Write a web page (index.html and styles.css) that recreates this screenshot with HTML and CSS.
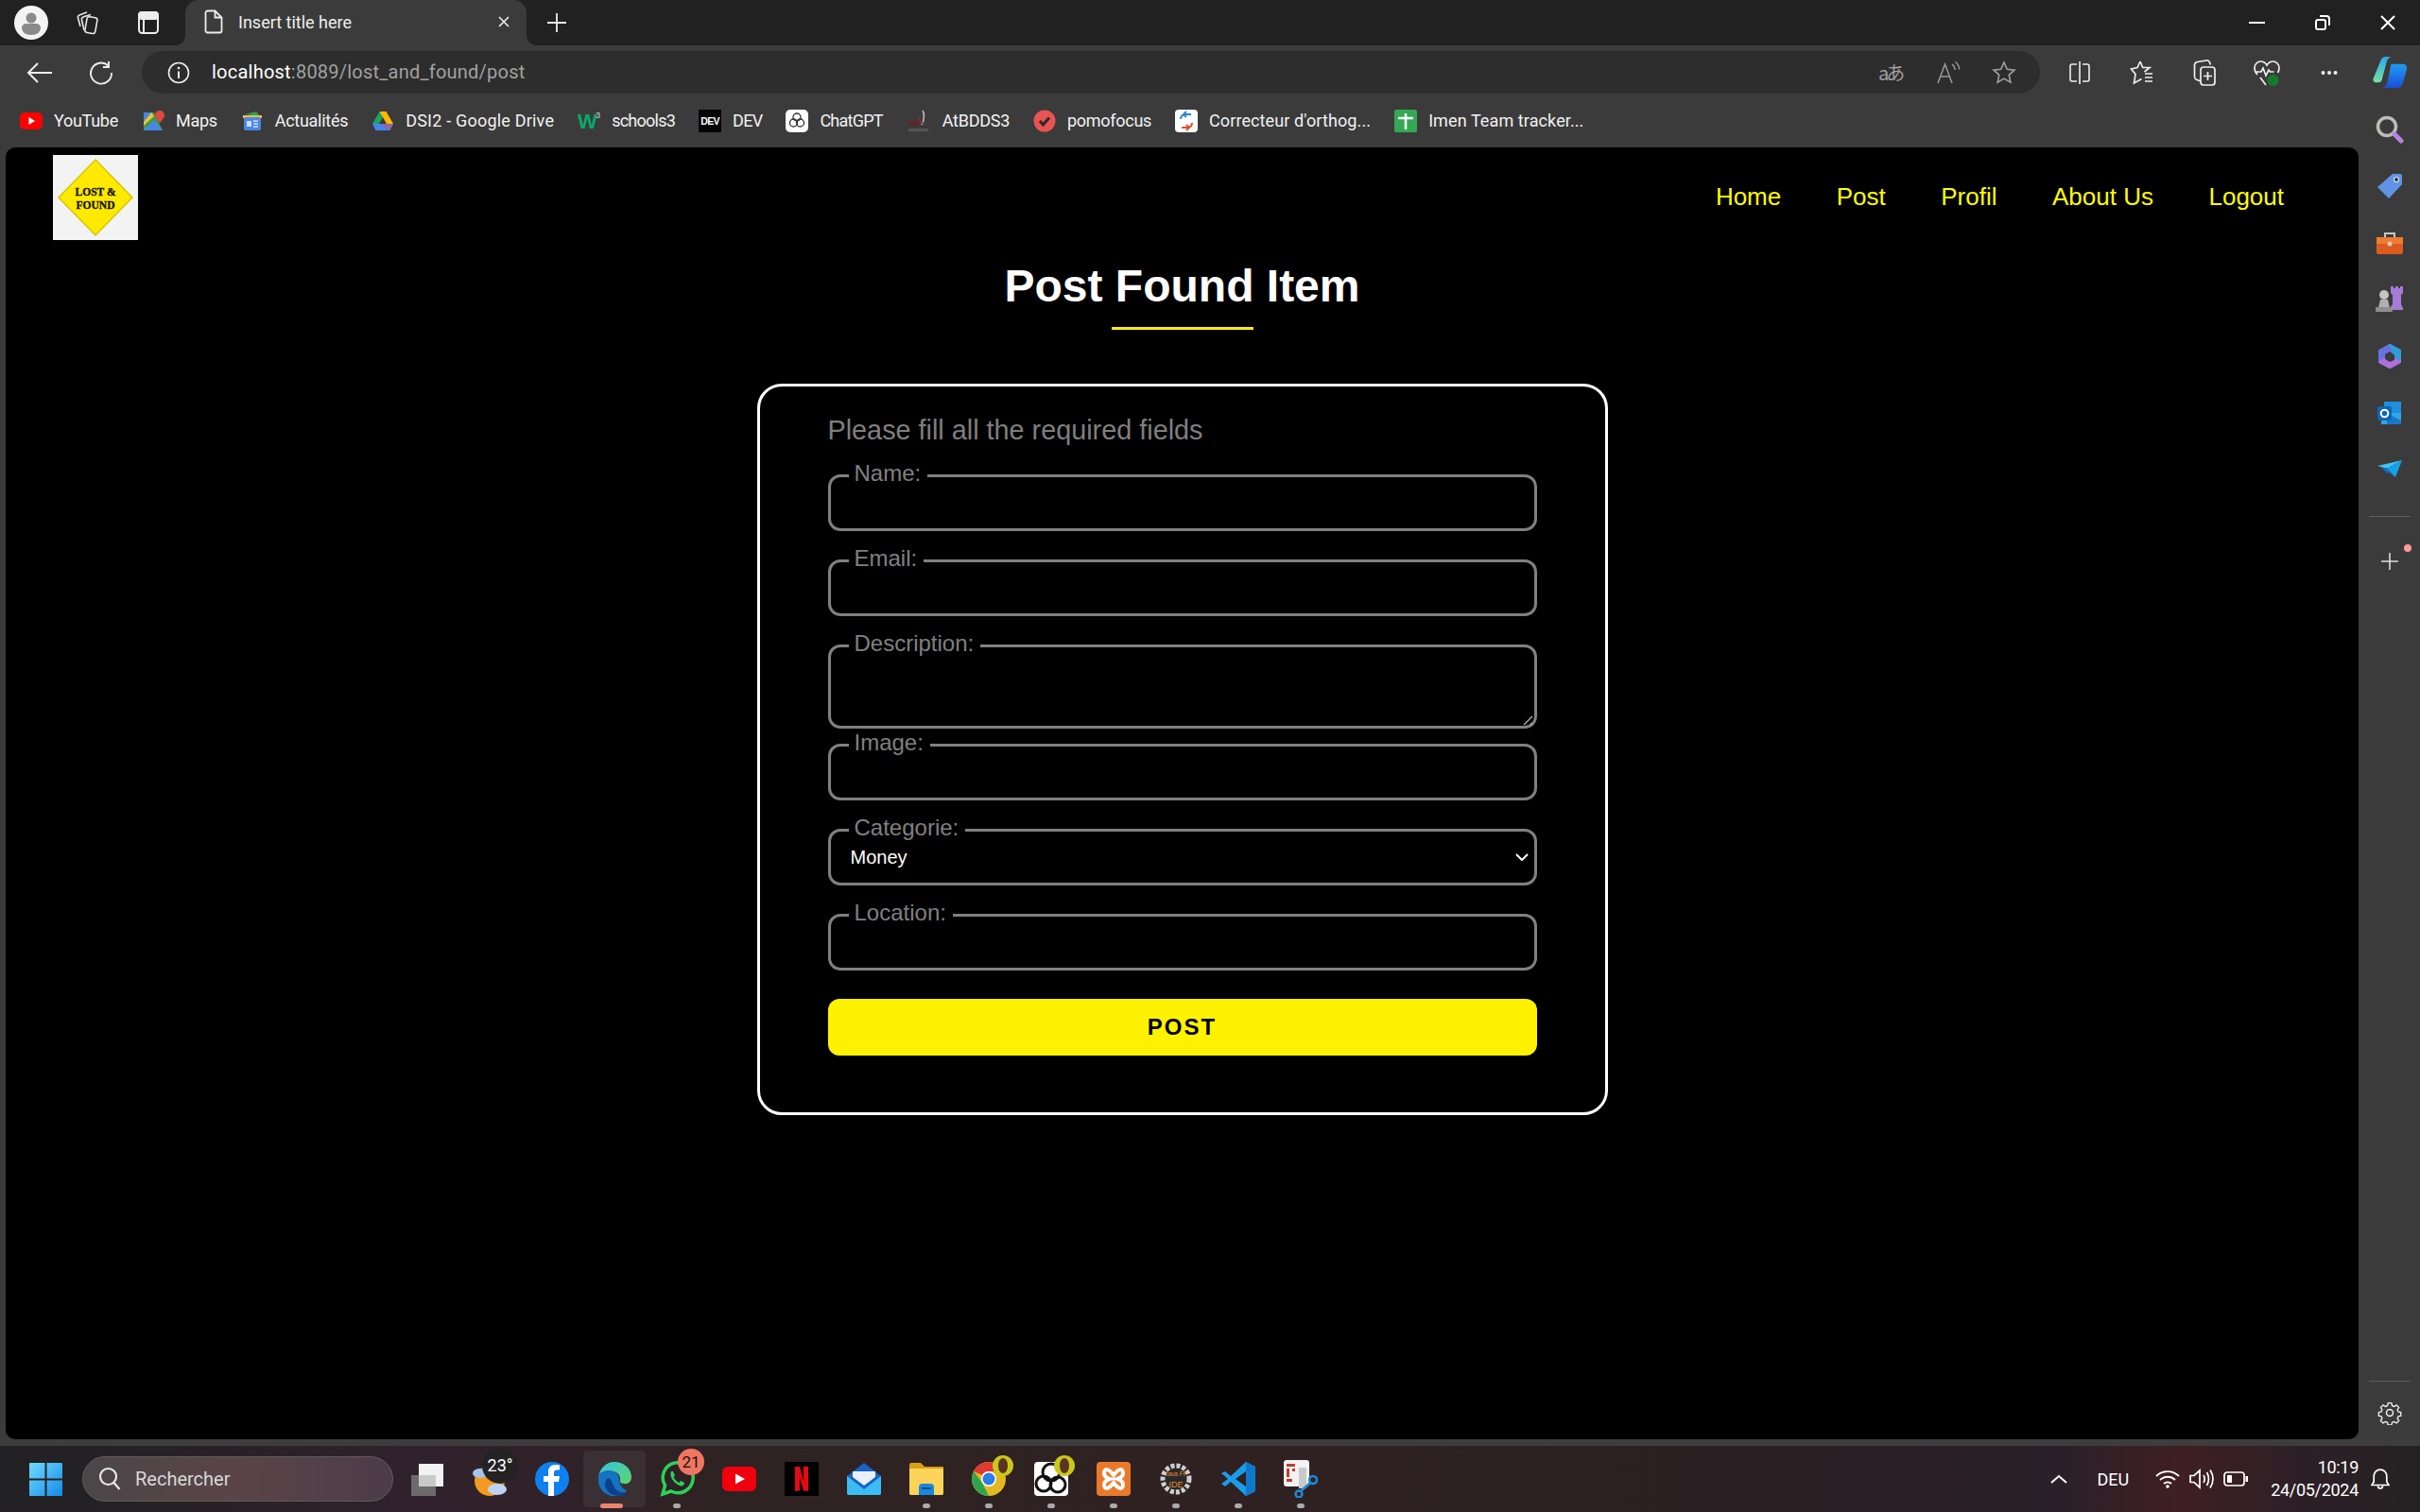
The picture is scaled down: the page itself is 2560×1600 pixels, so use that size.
FILE: index.html
```html
<!DOCTYPE html>
<html lang="fr">
<head>
<meta charset="utf-8">
<title>Insert title here</title>
<link rel="stylesheet" href="styles.css">
</head>
<body>
<div class="window">
  <div class="tabstrip">
    <div class="strip-left">
      <span class="avatar"><svg width="36" height="36" viewBox="0 0 36 36"><circle cx="18" cy="18" r="18" fill="#f4f4f4"/><circle cx="18" cy="13" r="5.500" fill="#8a8a8a"/><path d="M8 23a5 5 0 0 1 5-4h10a5 5 0 0 1 5 4c0 5-4 8-10 8s-10-3-10-8z" fill="#8a8a8a"/></svg></span>
      <span class="strip-icon workspaces"><svg width="28" height="28" viewBox="0 0 28 28" fill="none" stroke="#e8e8e8" stroke-width="1.600"><rect x="12" y="8" width="11" height="17" rx="2.500" transform="rotate(10 17 16)"/><path d="M10 22 7.500 11c-.4-1.800.3-2.800 2-3.300L17 5.500"/><path d="M6 18 3.500 9c-.4-1.800.3-2.800 2-3.300L13 3"/></svg></span>
      <span class="strip-icon tabs-icon"><svg width="24" height="26" viewBox="0 0 24 26" fill="none" stroke="#ececec" stroke-width="2"><rect x="2" y="2" width="20" height="22" rx="3.500"/><rect x="2" y="2" width="20" height="7" rx="3" fill="#ececec"/><path d="M7 9v15"/></svg></span>
    </div>
    <div class="tab">
      <svg class="tab-page" width="20" height="26" viewBox="0 0 20 26" fill="none" stroke="#ececec" stroke-width="1.800"><path d="M3.500 1.500h8l7 7v14a2 2 0 0 1-2 2h-13a2 2 0 0 1-2-2v-19a2 2 0 0 1 2-2zM11.500 1.500v7h7"/></svg>
      <span class="tab-title">Insert title here</span>
      <span class="tab-close"><svg width="14" height="14" viewBox="0 0 14 14" stroke="#eee" stroke-width="1.600"><path d="M2 2l10 10M12 2 2 12"/></svg></span>
    </div>
    <span class="new-tab"><svg width="22" height="22" viewBox="0 0 22 22" stroke="#eee" stroke-width="1.800"><path d="M11 1v20M1 11h20"/></svg></span>
    <div class="win-controls">
      <span class="win-btn"><svg width="18" height="4" viewBox="0 0 18 4"><rect y="1" width="17" height="2" fill="#fff"/></svg></span>
      <span class="win-btn"><svg width="18" height="18" viewBox="0 0 18 18" fill="none" stroke="#fff" stroke-width="2"><rect x="2" y="6" width="10" height="10" rx="2"/><path d="M6 2h7a3 3 0 0 1 3 3v7"/></svg></span>
      <span class="win-btn"><svg width="18" height="18" viewBox="0 0 18 18" stroke="#fff" stroke-width="2"><path d="M2 2l14 14M16 2 2 16"/></svg></span>
    </div>
  </div>

  <div class="toolbar">
    <span class="nav-btn"><svg width="28" height="24" viewBox="0 0 28 24" fill="none" stroke="#eee" stroke-width="2"><path d="M27 12H2M12 2 2 12l10 10"/></svg></span>
    <span class="nav-btn"><svg width="26" height="26" viewBox="0 0 26 26" fill="none" stroke="#eee" stroke-width="1.900"><path d="M20.500 5.500A11 11 0 1 0 24 13M21 1v6h-6"/></svg></span>
    <div class="address">
      <svg class="info" width="24" height="24" viewBox="0 0 24 24" fill="none" stroke="#eee" stroke-width="1.600"><circle cx="12" cy="12" r="10.500"/><path d="M12 10.500V18" stroke-width="2"/><circle cx="12" cy="7" r="1.300" fill="#eee" stroke="none"/></svg>
      <span class="url"><span class="url-host">localhost</span>:8089/lost_and_found/post</span>
      <span class="addr-icons">
        <span class="addr-glyph">aあ</span>
        <svg width="26" height="26" viewBox="0 0 26 26" fill="none" stroke="#999" stroke-width="1.500"><path d="M2 24 9.500 4 17 24M5 17h9M17 4c2 1.500 3 3.500 3 6M20.500 1.500c2.500 2 4 5 4 8"/></svg>
        <svg width="26" height="26" viewBox="0 0 26 26" fill="none" stroke="#a0a0a0" stroke-width="1.600"><path d="m13 2 3.300 7.300 7.700.8-5.800 5.200 1.700 7.900-6.900-4.100-6.900 4.100 1.700-7.900L2 10.100l7.700-.8z"/></svg>
      </span>
    </div>
    <div class="tool-icons">
      <span class="tool-icon"><svg width="24" height="24" viewBox="0 0 24 24" fill="none" stroke="#eee" stroke-width="1.600"><path d="M9 3H4a2 2 0 0 0-2 2v14a2 2 0 0 0 2 2h5M15 3h5a2 2 0 0 1 2 2v14a2 2 0 0 1-2 2h-5M12 0v24"/></svg></span>
      <span class="tool-icon"><svg width="26" height="28" viewBox="0 0 26 28" fill="none" stroke="#eee" stroke-width="1.700"><path d="m11 2 2.700 6.500H21L15.500 13M11 2 8 8.500 1.500 10l4.500 5.500L4.500 25l8-4.500M16 15h8M16 19h8M16 23h8"/></svg></span>
      <span class="tool-icon"><svg width="28" height="30" viewBox="0 0 28 30" fill="none" stroke="#eee" stroke-width="1.700"><rect x="10" y="9" width="15" height="19" rx="3"/><path d="M17.500 14v9M13 18.500h9M10 24 5 22c-1-.6-1.500-1.500-1.500-3V7c0-2 1-3 3-3.500L16 2c1.500-.2 3 .5 3.500 2l.8 2.500"/></svg></span>
      <span class="tool-icon heart"><svg width="30" height="30" viewBox="0 0 30 30" fill="none" stroke="#eee" stroke-width="1.700"><path d="M5 17C3 15 2 13 2 10c0-4 3-7 6.500-7 3 0 5 1.500 6.500 4 1.500-2.500 3.500-4 6.500-4C25 3 28 6 28 10c0 2-.5 3.500-1.500 5M4 14h5l2-4 3 8 3-6 1.500 2h4M8 20l6 8"/><circle cx="21.500" cy="23" r="6" fill="#167a2c" stroke="none"/></svg></span>
      <span class="tool-icon"><svg width="18" height="6" viewBox="0 0 18 6" fill="#eee"><circle cx="2.500" cy="3" r="2"/><circle cx="9" cy="3" r="2"/><circle cx="15.500" cy="3" r="2"/></svg></span>
    </div>
    <span class="copilot"><svg width="37" height="33" viewBox="0 0 38 34"><defs><linearGradient id="cpa" x1="0" y1="0" x2="0" y2="1"><stop offset="0" stop-color="#2aa8ea"/><stop offset="1" stop-color="#7be0a0"/></linearGradient><linearGradient id="cpb" x1="0" y1="0" x2="0" y2="1"><stop offset="0" stop-color="#1f9cf0"/><stop offset="1" stop-color="#1a4fd8"/></linearGradient></defs><path d="M9 3c1-2 3-3 5-3h6c-3 1-4 3-5 6l-5 19c-.5 2-2 3-4 3H3c-2 0-3-2-2.500-4z" fill="url(#cpa)"/><path d="M20 8h13c3 0 5 3 4 6l-4 14c-1 4-3 6-7 6H10c4-1 5-3 6-7l4-19z" fill="url(#cpb)"/></svg></span>
  </div>

  <div class="bookmarks">
    <span class="bm"><svg width="24" height="24" viewBox="0 0 24 24"><rect y="3" width="24" height="18" rx="5" fill="#f00"/><path d="m9.500 8 6.500 4-6.500 4z" fill="#fff"/></svg>YouTube</span>
    <span class="bm"><svg width="24" height="24" viewBox="0 0 24 24"><path d="M2 3h11l9 19H2z" fill="#3a9a52"/><path d="M2 22 13 11l9 11z" fill="#4a86e8"/><path d="M2 3h8L2 13z" fill="#4a86e8"/><path d="M10 3 2 13v4L13 7z" fill="#f2c230"/><path d="M19 1a5 5 0 0 0-5 5c0 3 5 8 5 8s5-5 5-8a5 5 0 0 0-5-5z" fill="#e0483c"/></svg>Maps</span>
    <span class="bm"><svg width="24" height="24" viewBox="0 0 24 24"><path d="M4 5 16 2l4 5z" fill="#2f9e55"/><path d="M2 6h20v3H2z" fill="#f4bf3c"/><rect x="3" y="8" width="18" height="14" rx="2" fill="#4a86e8"/><rect x="6" y="12" width="5" height="6" fill="#cfe0fb"/><path d="M13 12h5M13 15h5M13 18h5" stroke="#cfe0fb" stroke-width="1.500"/></svg>Actualités</span>
    <span class="bm bm-wide"><svg width="24" height="24" viewBox="0 0 24 24"><path d="M8.500 2h7L8 15H1z" fill="#1ea362"/><path d="M15.500 2 23 15h-7L8.500 2z" fill="#ffba00"/><path d="M1 15h22l-3.500 7h-15z" fill="#4285f4"/><path d="M8 15h15l-3.500 7z" fill="#ea4335" opacity=".45"/></svg>DSI2 - Google Drive</span>
    <span class="bm bm-tight"><svg width="24" height="24" viewBox="0 0 24 24"><text x="0" y="20" class="w3-letter">W</text><text x="19" y="9" class="w3-sup">3</text></svg>schools3</span>
    <span class="bm bm-tight"><svg width="24" height="24" viewBox="0 0 24 24"><rect width="24" height="24" fill="#050505"/><text x="12" y="16" text-anchor="middle" class="dev-mark">DEV</text></svg>DEV</span>
    <span class="bm bm-tight"><svg width="24" height="24" viewBox="0 0 24 24"><rect width="24" height="24" rx="5" fill="#fff"/><g fill="none" stroke="#333" stroke-width="1.300"><circle cx="12" cy="8" r="4"/><circle cx="8.500" cy="14" r="4"/><circle cx="15.500" cy="14" r="4"/></g></svg>ChatGPT</span>
    <span class="bm"><svg width="26" height="24" viewBox="0 0 26 24"><path d="M2 12h11v5H2z" fill="#5a2626"/><path d="M17 1c2 3 2 10-1 15" fill="none" stroke="#b9b9b9" stroke-width="1.600"/><path d="M13 7c0 5 3 8 7 8" fill="none" stroke="#7a3232" stroke-width="1.500"/><path d="M2 20h21v3H2z" fill="#555"/></svg>AtBDDS3</span>
    <span class="bm"><svg width="24" height="24" viewBox="0 0 24 24"><circle cx="12" cy="12" r="11.500" fill="#e95352"/><path d="m7 12 3.500 4L17 8.500" fill="none" stroke="#2a2a2a" stroke-width="3"/></svg>pomofocus</span>
    <span class="bm bm-loose"><svg width="24" height="24" viewBox="0 0 24 24"><rect width="24" height="24" rx="4" fill="#fff"/><path d="M6 10c0-4 3-5 6-5h5M12 2 9 5l3 3" fill="none" stroke="#2b86d9" stroke-width="2"/><path d="M18 14c0 4-3 5-6 5H7M12 16l3 3-3 3" fill="none" stroke="#e2512f" stroke-width="2"/></svg>Correcteur d'orthog...</span>
    <span class="bm bm-loose"><svg width="24" height="24" viewBox="0 0 24 24"><rect width="24" height="24" rx="2" fill="#34a853"/><path d="M4 9h16M12 4v17" stroke="#fff" stroke-width="2.500"/></svg>Imen Team tracker...</span>
  </div>

  <div class="middle">
    <main class="content">
      <header class="site-header">
        <svg class="logo" width="90" height="90" viewBox="0 0 90 90"><rect width="90" height="90" fill="#f3f3f3"/><path d="M45 5 84 45 45 85 6 45z" fill="#ffe900" stroke="#d6c600" stroke-width="1.500"/><text x="45" y="43" class="logo-text">LOST &amp;</text><text x="45" y="57" class="logo-text">FOUND</text></svg>
        <nav class="site-nav">
          <a class="site-link">Home</a>
          <a class="site-link">Post</a>
          <a class="site-link">Profil</a>
          <a class="site-link">About Us</a>
          <a class="site-link">Logout</a>
        </nav>
      </header>
      <h1 class="page-title">Post Found Item</h1>
      <div class="title-rule"></div>
      <form class="card">
        <p class="card-hint">Please fill all the required fields</p>
        <fieldset class="field"><legend class="field-label">Name:</legend><input class="field-input" type="text"></fieldset>
        <fieldset class="field"><legend class="field-label">Email:</legend><input class="field-input" type="text"></fieldset>
        <fieldset class="field field-tight"><legend class="field-label">Description:</legend>
          <div class="area-wrap"><textarea class="field-area"></textarea><svg class="area-grip" width="11" height="11" viewBox="0 0 11 11" fill="none" stroke="#b4b4b4" stroke-width="1.300"><path d="M1 10 10 1M8 10l2-2"/></svg></div>
        </fieldset>
        <fieldset class="field"><legend class="field-label">Image:</legend><input class="field-input" type="text"></fieldset>
        <fieldset class="field"><legend class="field-label">Categorie:</legend>
          <div class="select-wrap"><select class="field-select"><option>Money</option></select><svg class="select-chevron" width="14" height="9" viewBox="0 0 14 9" fill="none" stroke="#fff" stroke-width="2"><path d="m1 1.500 6 6 6-6"/></svg></div>
        </fieldset>
        <fieldset class="field"><legend class="field-label">Location:</legend><input class="field-input" type="text"></fieldset>
        <button class="submit" type="button">POST</button>
      </form>
    </main>
    <aside class="sidebar">
      <span class="side-icon"><svg width="30" height="30" viewBox="0 0 30 30" fill="none"><circle cx="12" cy="12" r="9.500" stroke="#bdbdb8" stroke-width="3.500"/><path d="m20 20 7 7" stroke="#b884e0" stroke-width="5" stroke-linecap="round"/></svg></span>
      <span class="side-icon"><svg width="28" height="28" viewBox="0 0 28 28"><path d="M17 1h8a2 2 0 0 1 2 2v9L13 27 1 15z" fill="#5f93e6"/><circle cx="21" cy="7" r="2.500" fill="#1d2a44" stroke="#dfe9fa" stroke-width="1.200"/></svg></span>
      <span class="side-icon"><svg width="28" height="24" viewBox="0 0 28 24"><path d="M9 6V2h10v4" fill="none" stroke="#c8c8c8" stroke-width="2"/><rect y="6" width="28" height="18" rx="2" fill="#dd5b1e"/><rect y="6" width="28" height="7" fill="#f07a30"/><circle cx="14" cy="13" r="2.500" fill="#ccc"/></svg></span>
      <span class="side-icon"><svg width="30" height="28" viewBox="0 0 30 28"><path d="M17 1h3v2h2V1h3v2h2V1h3v7l-2 2v10l2 4v2H16v-2l3-4V10l-2-2z" fill="#a77bd8" transform="translate(-1 -1)"/><circle cx="9" cy="9" r="5" fill="#c4c4c4"/><path d="M5 14h8l2 9H3z" fill="#b0b0b0"/><rect y="22" width="18" height="5" rx="1" fill="#8e8e8e"/></svg></span>
      <span class="side-icon"><svg width="26" height="28" viewBox="0 0 26 28" stroke-linejoin="round"><path d="M13 2 24 8v12l-11 6L2 20V8z" fill="#6a72df" stroke="#6a72df" stroke-width="2"/><path d="M13 2 24 8v12l-6-4V10z" fill="#2d9fd8" stroke="#2d9fd8" stroke-width="2"/><path d="M2 20 13 14l11 6-11 6z" fill="#b06fdc" stroke="#b06fdc" stroke-width="2"/><path d="M13 9l5 4v5l-5 2-5-3v-5z" fill="#3b3b3b"/></svg></span>
      <span class="side-icon"><svg width="26" height="26" viewBox="0 0 26 26"><rect x="7" y="1" width="18" height="13" fill="#1f8fdc"/><rect x="4" y="13" width="21" height="12" fill="#30a7e6"/><path d="M10 13l15 8v4H10z" fill="#1b78c4"/><rect y="6" width="15" height="15" rx="2" fill="#0d66b8"/><circle cx="7.500" cy="13.500" r="3.800" fill="none" stroke="#fff" stroke-width="2"/></svg></span>
      <span class="side-icon"><svg width="26" height="20" viewBox="0 0 26 20"><path d="M0 6 26 0 10 9z" fill="#3ec4f0"/><path d="M26 0 19 18l-9-9z" fill="#18a0e6"/><path d="M5 8h5l9 10-7-5-2 1z" fill="#0f6fc0"/></svg></span>
      <span class="side-sep"></span>
      <span class="side-add"><svg width="20" height="20" viewBox="0 0 20 20" stroke="#ddd" stroke-width="1.600"><path d="M10 1v18M1 10h18"/></svg><i class="side-dot"></i></span>
      <span class="side-spacer"></span>
      <span class="side-sep side-sep-low"></span>
      <span class="side-gear"><svg width="26" height="26" viewBox="0 0 26 26" fill="none" stroke="#eee" stroke-width="1.500"><circle cx="13" cy="13" r="3.500"/><path d="M11 1.500h4l.7 3.200 2.300 1 2.800-1.700 2.800 2.800-1.700 2.800 1 2.300 3 .7v3.800l-3 .7-1 2.300 1.700 2.800-2.800 2.800-2.800-1.700-2.300 1-.7 3h-4l-.7-3-2.300-1-2.800 1.700-2.800-2.800 1.700-2.800-1-2.300-3-.7v-3.800l3-.7 1-2.300L2.500 6.800l2.800-2.800 2.800 1.700 2.300-1z" transform="translate(1.200 1.200) scale(.91)"/></svg></span>
    </aside>
  </div>
  <div class="strip-gap"></div>

  <footer class="taskbar">
    <span class="win-logo"><svg width="35" height="35" viewBox="0 0 35 35"><defs><linearGradient id="wl" x1="0" y1="0" x2="1" y2="1"><stop offset="0" stop-color="#6fdcff"/><stop offset="1" stop-color="#1689e8"/></linearGradient></defs><path d="M0 1a1 1 0 0 1 1-1h15.500v16.500H0zM18.500 0H34a1 1 0 0 1 1 1v15.500H18.500zM0 18.500h16.500V35H1a1 1 0 0 1-1-1zM18.500 18.500H35V34a1 1 0 0 1-1 1H18.500z" fill="url(#wl)"/></svg></span>
    <div class="search">
      <svg width="24" height="26" viewBox="0 0 24 26" fill="none" stroke="#e8e8e8" stroke-width="2.200"><circle cx="10.500" cy="10.500" r="8.500"/><path d="m16.500 17 6 7"/></svg>
      <span class="search-text">Rechercher</span>
    </div>
    <div class="task-apps">
      <span class="app"><svg width="36" height="36" viewBox="0 0 36 36"><rect x="1" y="14" width="26" height="22" fill="#6b6b6b"/><rect x="9" y="2" width="26" height="24" fill="#f2f2f2"/><rect x="9" y="14" width="18" height="12" fill="#c9c9c9"/></svg></span>
      <span class="app app-weather"><svg width="38" height="40" viewBox="0 0 38 40"><circle cx="19" cy="22" r="16" fill="#f39a22"/><ellipse cx="9" cy="14" rx="8" ry="5" fill="#a8c4ec"/><ellipse cx="27" cy="31" rx="10" ry="6" fill="#bcd3f2"/></svg><b class="temp">23°</b></span>
      <span class="app"><svg width="36" height="36" viewBox="0 0 36 36"><circle cx="18" cy="18" r="18" fill="#0e80f0"/><path d="M20 36V21h5l1-6h-6v-3.500c0-2 1-3 3-3h3V3.500c-1-.2-3-.4-4.500-.4-4.500 0-7.500 2.700-7.500 7.500V15H9v6h5v15z" fill="#fff"/></svg></span>
      <span class="app app-active"><svg width="36" height="36" viewBox="0 0 36 36"><defs><linearGradient id="eg" x1="0" y1="0" x2="1" y2="1"><stop offset="0" stop-color="#33c5de"/><stop offset="1" stop-color="#5fd46b"/></linearGradient></defs><path d="M1 17C2 7 9 0 18 0c10 0 18 7 18 16 0 5-4 8-8 7-5 0-4-3-4-5 0-5-4-8-9-8-7 0-13 3-14 7z" fill="url(#eg)"/><path d="M1 17c0-6 6-8 11-8 7 0 11 4 11 10 0 5 3 9 8 11-3 4-8 6-13 6C8 36 0 28 1 17z" fill="#1473c2"/><path d="M12 17c-4 2-5 7-3 11 2 5 8 8 14 8 3 0 6-1 8-4-6 1-11-1-13-5-2-3-3-8-6-10z" fill="#0e3f8a"/></svg><i class="active-bar"></i></span>
      <span class="app"><svg width="38" height="38" viewBox="0 0 38 38" fill="none"><path d="M4 35l2.500-9A16 16 0 1 1 13 32z" stroke="#2bd257" stroke-width="3.500"/><path d="M13 11c-1 2-1 5 1.500 9 3 4 6 6 9 6.500 2 0 3.500-1.500 3.500-3.500l-4-2-1.500 2c-2.500-1-5-3.500-6-6l1.500-1.500-2-4.500z" fill="#2bd257"/></svg><b class="wa-badge">21</b><i class="run-dot"></i></span>
      <span class="app"><svg width="36" height="26" viewBox="0 0 36 26"><rect width="36" height="26" rx="6" fill="#f0000c"/><path d="m14 7.500 10 5.500-10 5.500z" fill="#fff"/></svg></span>
      <span class="app"><svg width="36" height="36" viewBox="0 0 36 36"><rect width="36" height="36" fill="#000"/><path d="M11 5h5l4 15V5h5v26c-2-.4-3.500-.5-5-.5L16 16v14.500c-2 0-3.500.3-5 .5z" fill="#e50914"/></svg></span>
      <span class="app"><svg width="36" height="34" viewBox="0 0 36 34"><path d="M18 0 36 14v18a2 2 0 0 1-2 2H2a2 2 0 0 1-2-2V14z" fill="#1764c4"/><path d="M0 14 18 28 36 14v18a2 2 0 0 1-2 2H2a2 2 0 0 1-2-2z" fill="#3bbcf4"/><path d="M6 9h24v6L18 24 6 15z" fill="#e9f0fa"/></svg></span>
      <span class="app"><svg width="36" height="34" viewBox="0 0 36 34"><path d="M0 2a2 2 0 0 1 2-2h10l4 4h20v28a2 2 0 0 1-2 2H2a2 2 0 0 1-2-2z" fill="#d9a014"/><path d="M0 6h36v26a2 2 0 0 1-2 2H2a2 2 0 0 1-2-2z" fill="#fcd45a"/><path d="M10 34v-8a4 4 0 0 1 4-4h8a4 4 0 0 1 4 4v8z" fill="#1a86dc"/><rect x="13" y="26" width="10" height="2" fill="#0c4f92"/></svg><i class="run-dot"></i></span>
      <span class="app"><svg width="52" height="52" viewBox="-9 0 52 52"><circle cx="17" cy="26" r="18" fill="#e3b922"/><path d="M17 8a18 18 0 0 1 16 10H17a8 8 0 0 0-7 4L1 18A18 18 0 0 1 17 8z" fill="#e0392f"/><path d="M1 18l9 12 7 14A18 18 0 0 1 1 18z" fill="#2ea44f"/><circle cx="17" cy="26" r="8" fill="#fff"/><circle cx="17" cy="26" r="6.500" fill="#2a7ee8"/><circle cx="32" cy="12" r="11" fill="#c9c81a"/><ellipse cx="32" cy="12" rx="5" ry="8" fill="#5a3324"/></svg><i class="run-dot"></i></span>
      <span class="app"><svg width="52" height="52" viewBox="-8 0 52 52"><rect y="8" width="36" height="36" rx="4" fill="#fff"/><g fill="none" stroke="#111" stroke-width="3"><circle cx="18" cy="19" r="9"/><circle cx="10" cy="31" r="8"/><circle cx="25" cy="32" r="8"/></g><circle cx="32" cy="12" r="11" fill="#c9c81a"/><ellipse cx="32" cy="12" rx="5" ry="8" fill="#5a3324"/></svg><i class="run-dot"></i></span>
      <span class="app"><svg width="36" height="36" viewBox="0 0 36 36"><rect width="36" height="36" rx="4" fill="#ea7a2a"/><path d="M18 14C12 6 8 7 8 12c0 3 3 5 6 6-3 1-6 3-6 6 0 5 4 6 10-2 6 8 10 7 10 2 0-3-3-5-6-6 3-1 6-3 6-6 0-5-4-6-10 2z" fill="none" stroke="#fff" stroke-width="4"/></svg><i class="run-dot"></i></span>
      <span class="app"><svg width="34" height="36" viewBox="0 0 34 36"><circle cx="17" cy="18" r="14" fill="#2a2a2a" stroke="#cfcfcf" stroke-width="5" stroke-dasharray="4 2"/><text x="17" y="15" class="java-top">Java FF</text><text x="17" y="27" class="java-low">IDE</text></svg><i class="run-dot"></i></span>
      <span class="app"><svg width="36" height="36" viewBox="0 0 36 36"><path d="M26 0 36 5v26l-10 5L10 21 4 26 0 23l7-5-7-6 4-2 6 5z" fill="#1a9ce8"/><path d="M26 0v36l10-5V5z" fill="#0f79c9"/><path d="M26 10 15 18l11 8z" fill="#2d2122"/></svg><i class="run-dot"></i></span>
      <span class="app"><svg width="36" height="40" viewBox="0 0 36 40"><rect width="27" height="28" rx="3" fill="#f2f2f2"/><path d="M3 4h9v3H3zM3 9h3v9H3zM9 9h3v3H9zM3 20h6v3H3z" fill="#c63a2a"/><rect x="16" y="8" width="8" height="22" fill="#c9c9c9"/><g fill="none" stroke="#1a8ed8" stroke-width="2.400"><circle cx="31" cy="21" r="4"/><circle cx="16" cy="36" r="3.500"/><path d="M28 24 18 33"/></g></svg><i class="run-dot"></i></span>
    </div>
    <div class="tray">
      <svg class="tray-up" width="18" height="10" viewBox="0 0 18 10" fill="none" stroke="#fff" stroke-width="2"><path d="m1 9 8-7 8 7"/></svg>
      <span class="tray-lang">DEU</span>
      <span class="tray-icons">
        <svg width="26" height="20" viewBox="0 0 26 20" fill="none" stroke="#fff" stroke-width="1.800"><path d="M1 7a17 17 0 0 1 24 0M5 11a11.500 11.500 0 0 1 16 0M9 15a6 6 0 0 1 8 0"/><circle cx="13" cy="18" r="1.800" fill="#fff" stroke="none"/></svg>
        <svg width="26" height="22" viewBox="0 0 26 22" fill="none" stroke="#fff" stroke-width="1.700"><path d="M1 7.500h4L11 2v18l-6-5.500H1zM15 7c1.500 2.500 1.500 5.500 0 8M18.500 4c2.500 4.500 2.500 9.500 0 14M22 1.500c3.800 6 3.800 13 0 19"/></svg>
        <svg width="26" height="16" viewBox="0 0 26 16" fill="none" stroke="#fff" stroke-width="1.700"><rect x="1" y="1" width="21" height="14" rx="3"/><rect x="4" y="4" width="5" height="8" fill="#fff" stroke="none"/><rect x="23.500" y="5" width="2.500" height="6" fill="#fff" stroke="none"/></svg>
      </span>
      <span class="clock"><span>10:19</span><span>24/05/2024</span></span>
      <svg class="bell" width="20" height="24" viewBox="0 0 20 24" fill="none" stroke="#fff" stroke-width="1.700"><path d="M1 18.500 3.200 15V9a6.800 6.800 0 0 1 13.600 0v6l2.200 3.500zM7.500 19.500a2.500 2.500 0 0 0 5 0"/></svg>
    </div>
  </footer>
</div>
</body>
</html>
```
FILE: styles.css
```css
* { box-sizing: border-box; }
html, body { margin: 0; padding: 0; }
body { width: 2560px; height: 1600px; overflow: hidden; background: #3b3b3b; font-family: "Liberation Sans", Arial, sans-serif; }
.window { width: 2560px; height: 1600px; display: flex; flex-direction: column; }
svg { display: block; flex: none; }

/* tab strip */
.tabstrip { height: 48px; flex: none; background: #212121; display: flex; align-items: stretch; }
.strip-left { width: 196px; display: flex; align-items: center; padding-left: 15px; }
.avatar { width: 36px; }
.strip-icon { display: flex; justify-content: center; }
.workspaces { width: 28px; margin-left: 28px; }
.tabs-icon { width: 24px; margin-left: 38px; }
.tab { width: 361px; background: #3b3b3b; border-radius: 14px 14px 0 0; display: flex; align-items: center; padding: 0 0 2px 20px; position: relative; }
.tab::before, .tab::after { content: ""; position: absolute; bottom: 0; width: 10px; height: 10px; }
.tab::before { left: -10px; background: radial-gradient(circle at 0 0, #212121 9.500px, #3b3b3b 10px); }
.tab::after { right: -10px; background: radial-gradient(circle at 100% 0, #212121 9.500px, #3b3b3b 10px); }
.tab-title { margin-left: 16px; font: 18px "Roboto", sans-serif; color: #eee; }
.tab-close { margin-left: auto; margin-right: 17px; }
.new-tab { margin-left: 21px; display: flex; align-items: center; }
.win-controls { margin-left: auto; display: flex; align-items: center; }
.win-btn { width: 69px; display: flex; justify-content: center; }

/* toolbar */
.toolbar { height: 51px; flex: none; background: #3b3b3b; display: flex; align-items: flex-end; padding-left: 28px; position: relative; }
.nav-btn { width: 66px; height: 45px; display: flex; align-items: center; }
.address { margin-left: -10px; width: 2008px; height: 45px; background: #2d2d2d; border-radius: 23px; display: flex; align-items: center; padding: 0 25px 0 27px; }
.url { margin-left: 23px; padding-bottom: 2px; font: 20px "Roboto", sans-serif; color: #a2a2a2; letter-spacing: 0.23px; }
.url-host { color: #fff; }
.addr-icons { margin-left: auto; display: flex; align-items: center; gap: 33px; }
.addr-glyph { font: 20px "Noto Sans CJK JP", "Roboto", sans-serif; color: #a0a0a0; letter-spacing: -3px; width: 28px; }
.tool-icons { display: flex; height: 45px; align-items: center; margin-left: 9px; }
.tool-icon { width: 66px; display: flex; justify-content: center; }
.copilot { position: absolute; left: 2510px; top: 12px; }

/* bookmarks */
.bookmarks { height: 57px; flex: none; background: #3b3b3b; display: flex; align-items: center; padding-left: 21px; gap: 25px; }
.bm { display: flex; align-items: center; gap: 12px; font: 18px "Roboto", sans-serif; color: #f2f2f2; letter-spacing: -0.28px; white-space: nowrap; }
.bm-wide { letter-spacing: 0.2px; }
.bm-tight { letter-spacing: -0.75px; }
.bm-loose { letter-spacing: 0.1px; }
.w3-letter { font: bold 22px "Liberation Sans", sans-serif; fill: #04aa6d; }
.w3-sup { font: 9px "Liberation Sans", sans-serif; fill: #ddd; }
.dev-mark { font: bold 10.500px "Liberation Sans", sans-serif; fill: #fff; }

/* page */
.middle { flex: 1; display: flex; min-height: 0; }
.content { width: 2489px; margin-left: 6px; background: #000; border-radius: 10px; display: flex; flex-direction: column; align-items: center; overflow: hidden; }
.site-header { width: 100%; display: flex; justify-content: space-between; align-items: center; padding: 8px 79px 0 50px; }
.logo-text { font: bold 11.500px "Liberation Serif", serif; fill: #141400; stroke: #141400; stroke-width: .35px; text-anchor: middle; }
.site-nav { display: flex; gap: 58.500px; padding-bottom: 3px; }
.site-link { font-size: 26px; color: #ffff00; line-height: 30px; }
.page-title { margin: 21px 0 0; font-size: 48px; line-height: 55px; font-weight: bold; color: #fff; }
.title-rule { width: 150px; height: 3px; background: #ffe81a; margin-top: 16px; }
.card { width: 900px; margin-top: 57px; border: 3px solid #fff; border-radius: 26px; padding: 30px 72px 60px 72px; }
.card-hint { margin: 0 0 15px; font-size: 28.800px; line-height: 33px; color: #7f7f7f; }
.field { margin: 0 0 15px; padding: 0; border: 3px solid #808080; border-radius: 13px; min-width: 0; }
.field-tight { margin-bottom: 1px; }
.field-label { margin-left: 19px; padding: 0 7px 6px 6px; font-size: 24px; line-height: 27px; color: #808080; }
.field-input { display: block; width: 100%; height: 39px; background: transparent; border: 0; outline: 0; margin: 0; }
.select-wrap { position: relative; height: 55px; margin-top: -16px; }
.field-select { display: block; width: 100%; height: 100%; appearance: none; background: transparent; border: 0; outline: 0; margin: 0; color: #fff; font: 20px "Liberation Sans", sans-serif; padding-left: 21px; }
.select-chevron { position: absolute; right: 6px; top: 50%; transform: translateY(-50%); }
.area-wrap { position: relative; height: 68px; }
.field-area { display: block; width: 100%; height: 100%; background: transparent; border: 0; outline: 0; margin: 0; resize: none; }
.area-grip { position: absolute; right: 1px; bottom: 0; }
.submit { display: block; width: 100%; height: 60px; margin-top: 30px; background: #fff200; border: 0; border-radius: 12px; font: bold 24px "Liberation Sans", sans-serif; letter-spacing: 2px; color: #000; }

/* sidebar */
.sidebar { flex: 1; margin-top: -49px; display: flex; flex-direction: column; align-items: center; padding-bottom: 15px; position: relative; }
.side-icon { height: 60px; display: flex; align-items: center; justify-content: center; flex: none; }
.side-sep { width: 44px; height: 1px; background: #5e5e5e; flex: none; margin-top: 19px; }
.side-add { position: relative; margin-top: 37px; }
.side-dot { position: absolute; left: 25px; top: -8px; width: 8px; height: 8px; border-radius: 50%; background: #ff9a9a; }
.side-spacer { flex: 1; }
.side-sep-low { margin-top: 0; margin-bottom: 20px; }
.side-gear { flex: none; }

.strip-gap { height: 7px; flex: none; background: #3d3d3d; }

/* taskbar */
.taskbar { height: 70px; flex: none; display: flex; align-items: center; background: linear-gradient(90deg, #222123 0%, #2a2226 12%, #31212d 17%, #2f2223 30%, #2f2122 55%, #2b2024 75%, #2a2029 85%, #3f1f22 90%, #2c2026 95%, #252223 100%); position: relative; }
.win-logo { margin-left: 31px; }
.search { margin-left: 21px; width: 329px; height: 48px; border-radius: 24px; background: linear-gradient(90deg, #4b4648, #5a4448 50%, #4c3c48); border: 1px solid #5f5a5c; display: flex; align-items: center; padding-left: 16px; gap: 15px; }
.search-text { font: 20px "Roboto", sans-serif; color: #d8d8d8; }
.task-apps { display: flex; margin-left: 3px; }
.app { width: 66px; height: 60px; display: flex; align-items: center; justify-content: center; position: relative; }
.app-active { background: #3a2f33; border-radius: 5px; }
.active-bar { position: absolute; left: 18px; bottom: -1px; width: 24px; height: 5px; border-radius: 3px; background: #ec8471; }
.run-dot { position: absolute; left: 29px; bottom: -1px; width: 8px; height: 5px; border-radius: 3px; background: #aaa; }
.temp { position: absolute; left: 25px; top: -3px; width: 38px; height: 38px; border-radius: 50%; background: #232323; color: #fff; font: 18px "Roboto", sans-serif; text-align: center; line-height: 38px; }
.wa-badge { position: absolute; left: 34px; top: -2px; width: 28px; height: 28px; border-radius: 50%; background: #f07662; color: #111; font: 17px "Roboto", sans-serif; text-align: center; line-height: 28px; }
.java-top { font: 6.500px "Liberation Sans", sans-serif; fill: #e98a2a; text-anchor: middle; }
.java-low { font: 9px "Liberation Sans", sans-serif; fill: #e98a2a; text-anchor: middle; }
.tray { margin-left: auto; display: flex; align-items: center; padding-right: 32px; }
.tray-lang { margin-left: 31px; font: 18px "Roboto", sans-serif; color: #fff; }
.tray-icons { display: flex; align-items: center; gap: 10px; margin-left: 28px; }
.clock { margin-left: 24px; display: flex; flex-direction: column; align-items: flex-end; font: 18px/24px "Roboto", sans-serif; color: #fff; letter-spacing: -0.3px; }
.bell { margin-left: 13px; }
```
